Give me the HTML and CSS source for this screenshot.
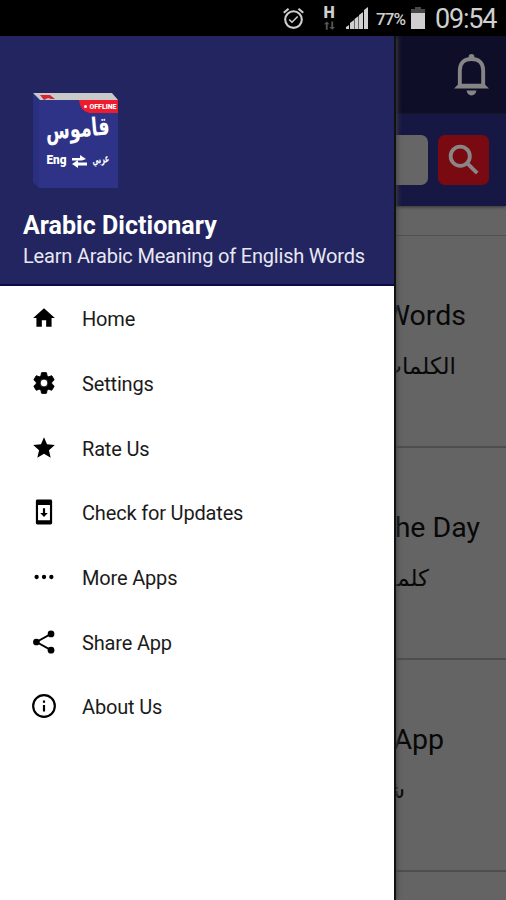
FILE: index.html
```html
<!DOCTYPE html>
<html lang="en">
<head>
<meta charset="utf-8">
<title>Arabic Dictionary</title>
<link rel="stylesheet" href="styles.css">
</head>
<body>
<div class="phone">
  <header class="status">
    <svg class="alarm" viewBox="0 0 24 24"><path d="M22 5.72l-4.6-3.86-1.29 1.53 4.6 3.86L22 5.72zM7.88 3.39L6.6 1.86 2 5.71l1.29 1.53 4.59-3.85zM12 4a9 9 0 1 0 0 18 9 9 0 0 0 0-18zm0 16a7 7 0 1 1 0-14 7 7 0 0 1 0 14zm-1.46-5.47L8.41 12.4l-1.06 1.06 3.18 3.18 6-6-1.06-1.06-4.93 4.95z"/></svg>
    <div class="network"><b>H</b><svg viewBox="0 0 12 9"><path d="M3 0L0 3h2v6h2V3h2zM9 9l3-3h-2V0H8v6H6z"/></svg></div>
    <svg class="signal" viewBox="0 0 23 23"><path d="M0 22v-2l3-2v4zM4 22v-6l4-3v9zM8.500 22V12l4-3v13zM13 22V8l4-3v17zM18 22V3l4-3v22z"/></svg>
    <span class="percent">77%</span>
    <svg class="battery" viewBox="0 0 14 22"><path class="dim" d="M4 0h6v2h4v4H0V2h4z"/><path d="M0 6h14v16H0z"/></svg>
    <span class="clock">09:54</span>
  </header>
  <main class="screen">
    <div class="appbar"><svg viewBox="0 0 36 42"><path class="line" d="M6 33V16C6 8 11 4.500 18 4.500S30 8 30 16v17"/><path d="M15 4V2.500a3 3 0 0 1 6 0V4zM0 35l5-5h26l5 5zM13 37h10a5 5 0 0 1-10 0z"/></svg></div>
    <div class="search"><div class="field"></div><div class="go"><svg viewBox="0 0 34 34"><circle cx="13" cy="13" r="10.200"/><path d="M20.500 20.500L31 31"/></svg></div></div>
    <div class="gap"></div>
    <section class="card words"><h2>Words</h2><p lang="ar" dir="rtl">الكلمات</p></section>
    <section class="card day"><h2>the Day</h2><p lang="ar" dir="rtl">كلمة</p></section>
    <section class="card app"><h2>App</h2><p lang="ar" dir="rtl">شا</p></section>
    <div class="rest"></div>
  </main>
  <aside class="drawer">
    <div class="profile">
      <svg class="logo" viewBox="0 0 88 98">
        <path fill="#2e3388" d="M1 2l7 6h78v88H8l-7-6z"/>
        <path fill="#2b2f80" d="M1 2l6 6v88l-6-6z"/>
        <path fill="#c9c9c9" d="M1 1h79l6 7H8z"/>
        <path fill="#d52631" d="M8 3h10l5 4h-4l-3-1-4 2z"/>
        <path fill="#ed1c2e" d="M47 8h39v13H57Q48 19 47 8z"/>
        <circle cx="53.500" cy="14.500" r="1.500" fill="#fff"/>
        <text class="offline" x="57.500" y="17" textLength="27" lengthAdjust="spacingAndGlyphs">OFFLINE</text>
        <text class="qamus" x="46" y="45" textLength="64" lengthAdjust="spacingAndGlyphs" transform="rotate(-5 46 43)">قاموس</text>
        <text class="eng" x="14.500" y="72" textLength="20" lengthAdjust="spacingAndGlyphs">Eng</text>
        <path fill="#fff" d="M40 66h8v-3l6 4-4 1.500H40zM55 70.500h-9V68l-6 4 6 4v-2.500h9z"/>
        <text class="arabi" x="69" y="71" textLength="17" lengthAdjust="spacingAndGlyphs" transform="rotate(-8 69 70)">عربي</text>
      </svg>
      <h1>Arabic Dictionary</h1>
      <p>Learn Arabic Meaning of English Words</p>
    </div>
    <nav>
      <a><svg viewBox="0 0 24 24"><path d="M10 20v-6h4v6h5v-8h3L12 3 2 12h3v8z"/></svg><span>Home</span></a>
      <a><svg class="gear" viewBox="0 0 24 24"><path d="M19.140 12.940c.04-.3.060-.61.060-.94s-.02-.64-.07-.94l2.030-1.580c.18-.14.230-.41.120-.61l-1.920-3.320c-.12-.22-.37-.29-.59-.22l-2.390.96c-.5-.38-1.030-.7-1.620-.94L14.400 2.810c-.04-.24-.24-.41-.48-.41h-3.840c-.24 0-.43.17-.47.41L9.250 5.350c-.59.24-1.130.57-1.620.94l-2.390-.96c-.22-.08-.47 0-.59.22L2.740 8.870c-.12.21-.08.470.120.610l2.030 1.580c-.05.3-.09.630-.09.940s.020.640.070.940l-2.030 1.580c-.18.140-.23.410-.12.610l1.920 3.320c.12.220.37.290.590.220l2.390-.96c.5.380 1.030.7 1.620.94l.36 2.540c.05.240.240.410.480.410h3.840c.24 0 .44-.17.470-.41l.36-2.540c.59-.24 1.130-.56 1.620-.94l2.390.96c.22.080.470 0 .59-.22l1.920-3.320c.12-.22.070-.47-.12-.61l-2.010-1.580zM12 15.600a3.600 3.600 0 1 1 0-7.200 3.600 3.600 0 0 1 0 7.200z"/></svg><span>Settings</span></a>
      <a><svg viewBox="0 0 24 24"><path d="M12 17.270L18.180 21l-1.640-7.030L22 9.240l-7.190-.61L12 2 9.190 8.630 2 9.240l5.460 4.730L5.820 21z"/></svg><span>Rate Us</span></a>
      <a><svg viewBox="0 0 24 24"><path d="M18 .5H6c-.9 0-1.500.6-1.500 1.500v20c0 .9.600 1.500 1.500 1.500h12c.9 0 1.500-.6 1.500-1.500V2c0-.9-.6-1.500-1.500-1.500zM17.500 19.500h-11v-14h11v14zM15.500 13h-2.500V8.500h-2V13H8.500l3.500 3.500z"/></svg><span>Check for Updates</span></a>
      <a><svg viewBox="0 0 24 24"><circle cx="5.200" cy="12" r="2"/><circle cx="12" cy="12" r="2"/><circle cx="18.800" cy="12" r="2"/></svg><span>More Apps</span></a>
      <a><svg viewBox="0 0 24 24"><path d="M5 12L18.500 4.500M5 12l13.500 7.500" stroke="#000" stroke-width="1.800"/><circle cx="5" cy="12" r="3.100"/><circle cx="18.500" cy="4.500" r="3.100"/><circle cx="18.500" cy="19.500" r="3.100"/></svg><span>Share App</span></a>
      <a><svg viewBox="0 0 24 24"><path d="M11 17h2v-6h-2v6zm1-16a11 11 0 1 0 0 22 11 11 0 0 0 0-22zm0 20a9 9 0 1 1 0-18 9 9 0 0 1 0 18zM11 9h2V7h-2v2z"/></svg><span>About Us</span></a>
    </nav>
  </aside>
</div>
</body>
</html>
```
FILE: styles.css
```css
* { box-sizing: border-box; }
body, h1, h2, p { margin: 0; }
body { font-family: Roboto, "Liberation Sans", sans-serif; background: #000; }
svg { display: block; flex: none; overflow: visible; }
.phone { position: relative; width: 506px; height: 900px; overflow: hidden; display: flex; flex-direction: column; }
.status { height: 36px; flex: none; background: #000; color: #cfcfcf; fill: #cfcfcf; display: flex; align-items: center; padding-left: 281px; white-space: nowrap; }
.alarm { width: 25px; height: 25px; }
.network { width: 12px; margin-left: 17px; display: flex; flex-direction: column; align-items: center; }
.network b { font-size: 16px; font-weight: 900; line-height: 13px; }
.network svg { width: 11px; height: 9px; margin-top: 2px; fill: #565656; }
.signal { width: 23px; height: 23px; margin-left: 11px; }
.percent { width: 33px; margin-left: 7px; font-size: 17px; font-weight: 500; letter-spacing: -.9px; padding-top: 2px; }
.battery { width: 14px; height: 22px; margin-left: 2px; }
.dim { fill: #484848; }
.clock { margin-left: 10px; font-size: 27px; letter-spacing: -1.200px; padding-top: 2px; }

.screen { flex: 1; background: #646464; display: flex; flex-direction: column; }
.appbar { height: 78px; flex: none; background: #0f0e28; display: flex; align-items: center; justify-content: flex-end; padding-right: 17px; }
.appbar svg { width: 35px; height: 42px; fill: #858585; }
.appbar .line { fill: none; stroke: #858585; stroke-width: 4; }
.search { height: 92px; flex: none; background: #171744; display: flex; align-items: center; justify-content: flex-end; gap: 10px; padding-right: 17px; box-shadow: 0 1px 3px #333; }
.field { width: 200px; height: 50px; border-radius: 7px; background: #666; }
.go { width: 51px; height: 50px; border-radius: 7px; background: #790a12; display: flex; align-items: center; justify-content: center; }
.go svg { width: 32px; height: 32px; fill: none; stroke: #8b8686; stroke-width: 4; }
.gap { height: 30px; flex: none; border-bottom: 1px solid #505050; }
.card { height: 212px; flex: none; border-bottom: 2px solid #4e4e4e; color: #080808; display: flex; flex-direction: column; align-items: flex-end; padding-top: 62px; }
.card h2 { font-size: 28.500px; font-weight: 400; line-height: 36px; }
.card p { font-family: "DejaVu Sans", sans-serif; font-size: 23px; line-height: 32px; margin-top: 16px; }
.words h2 { margin-right: 40px; }
.words p { margin-right: 50px; }
.day h2 { margin-right: 26px; }
.day p { margin-right: 77px; }
.app h2 { margin-right: 62px; }
.app p { margin-right: 101px; }
.rest { flex: 1; }

.drawer { position: absolute; left: 0; top: 36px; width: 394px; height: 864px; background: #fff; box-shadow: 2px 0 0 #111, 3px 0 5px #444; clip-path: inset(0 -12px 0 0); }
.profile { height: 250px; background: #22255f; border-bottom: 2px solid #0b0b49; color: #fff; padding: 56px 0 0 23px; white-space: nowrap; }
.logo { width: 88px; height: 98px; margin-left: 9px; }
.profile h1 { font-size: 25px; font-weight: 700; line-height: 30px; margin-top: 21px; letter-spacing: .03px; }
.profile p { font-size: 20px; line-height: 28px; margin-top: 1px; color: #e8e8f3; letter-spacing: -.19px; }
.logo text { fill: #fff; }
.offline { font: 900 6.500px Roboto, sans-serif; }
.eng { font: 900 12px Roboto, sans-serif; }
.qamus, .arabi { text-anchor: middle; font-family: "DejaVu Sans", sans-serif; font-weight: 700; }
.qamus { font-size: 25px; }
.arabi { font-size: 12px; }
nav { display: flex; flex-direction: column; }
nav a { height: 64.700px; display: flex; align-items: center; padding-left: 31px; color: #1b1b1b; font-size: 20px; }
nav svg { width: 26px; height: 26px; fill: #000; }
nav .gear { stroke: #000; stroke-width: .8; }
nav span { margin-left: 25px; letter-spacing: -.17px; padding-top: 2px; }
```
